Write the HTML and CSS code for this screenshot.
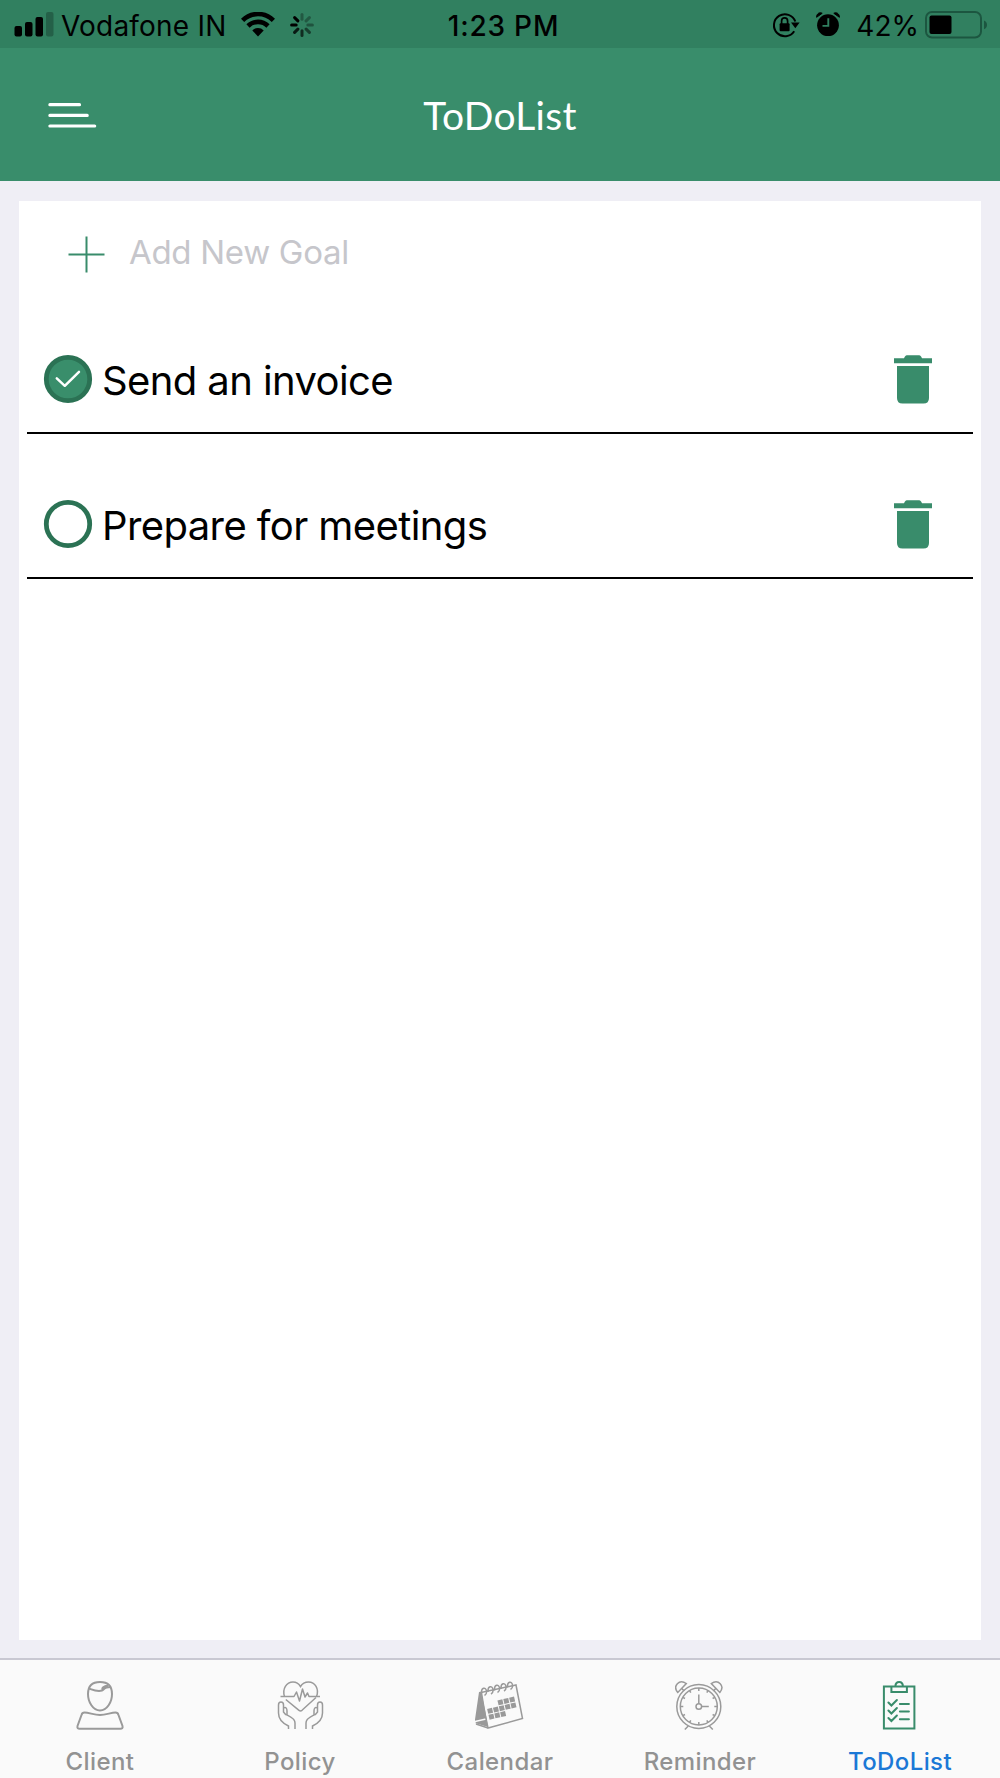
FILE: index.html
```html
<!DOCTYPE html>
<html lang="en">
<head>
  <meta charset="UTF-8"/>
  <meta name="viewport" content="width=device-width, initial-scale=1.0"/>
  <title>ToDoList</title>
  <link rel="stylesheet" href="styles.css">
</head>
<body>
<div class="status-bar">
  <div class="status-left">
    <svg class="signal" width="40" height="26" viewBox="0 0 40 26">
      <rect x="0.5" y="15" width="7.5" height="10.5" rx="2"/>
      <rect x="11" y="11" width="7.5" height="14.5" rx="2"/>
      <rect x="21.5" y="6" width="7.5" height="19.5" rx="2"/>
      <rect x="32" y="1" width="7.5" height="24.5" rx="2" opacity="0.25"/>
    </svg>
    <span class="carrier">Vodafone IN</span>
    <svg class="wifi" width="34" height="25" viewBox="0 0 34 25">
      <g fill="none" stroke="#000" stroke-width="4.6">
        <path d="M1.6 8.3a22 22 0 0 1 30.8 0"/>
        <path d="M7 14a14.3 14.3 0 0 1 20 0"/>
      </g>
      <path d="M11.3 18.4a8 8 0 0 1 11.4 0L17 24.4z"/>
    </svg>
    <svg class="spinner" width="24" height="24" viewBox="-12 -12 24 24">
      <g stroke="#000" stroke-width="3" stroke-linecap="round">
        <path d="M0-5.8V-10.4" opacity="0.3"/>
        <path d="M4.1-4.1L7.4-7.4" opacity="0.3"/>
        <path d="M5.8 0H10.4" opacity="0.35"/>
        <path d="M4.1 4.1L7.4 7.4" opacity="0.5"/>
        <path d="M0 5.8V10.4" opacity="0.65"/>
        <path d="M-4.1 4.1L-7.4 7.4" opacity="0.8"/>
        <path d="M-5.8 0H-10.4"/>
        <path d="M-4.1-4.1L-7.4-7.4"/>
      </g>
    </svg>
  </div>
  <span class="time">1:23 PM</span>
  <div class="status-right">
    <svg class="lock" width="28" height="26" viewBox="0 0 28 26">
      <path d="M22.2 19.2A11 11 0 1 1 23.3 9.5" fill="none" stroke="#000" stroke-width="2"/>
      <path d="M19 10.6h8.6l-4.3 5.6z"/>
      <rect x="7.6" y="11.2" width="10" height="8" rx="1"/>
      <path d="M9.6 12V9a3 3.2 0 0 1 6 0v3" fill="none" stroke="#000" stroke-width="1.7"/>
    </svg>
    <svg class="alarm" width="24" height="25" viewBox="0 0 24 25">
      <circle cx="12" cy="13.2" r="10.9"/>
      <path d="M0.6 5.3C0.6 1.5 3.5-0.1 6.2 1.3zM23.4 5.3C23.4 1.5 20.5-0.1 17.8 1.3z" stroke="#000"/>
      <path d="M12.3 6.3v7.6H6.5" fill="none" stroke="#318060" stroke-width="1.9"/>
    </svg>
    <span class="percent">42%</span>
    <svg class="battery" width="64" height="28" viewBox="0 0 64 28">
      <rect x="1" y="1" width="55" height="25.5" rx="6" fill="none" stroke="#1c5640" stroke-width="2"/>
      <rect x="4.5" y="4.5" width="22" height="18.5" rx="2"/>
      <path d="M59 9.5c4 1.4 4 7.4 0 8.8z" fill="#1c5640"/>
    </svg>
  </div>
</div>

<header>
  <svg class="menu-btn" width="49" height="26" viewBox="0 0 49 26">
    <path d="M1.9 2.7H31.5M1.9 13.4H39.2M1.9 24H46.7" stroke="#fff" stroke-width="3.2" stroke-linecap="round"/>
  </svg>
  <h1>ToDoList</h1>
</header>

<main>
  <div class="card">
    <div class="add-goal">
      <svg width="37" height="37" viewBox="0 0 37 37">
        <path d="M18.5 0.5V36.5M0.5 18.5H36.5" stroke="#398c6b" stroke-width="2"/>
      </svg>
      <span>Add New Goal</span>
    </div>

    <ul class="goal-list">
      <li>
        <svg class="check" width="50" height="50" viewBox="0 0 50 50">
          <circle cx="25" cy="25" r="21.7" fill="#398e6b" stroke="#2b7254" stroke-width="4.8"/>
          <path d="M13.8 24.3L21.8 31.8L36 17.8" fill="none" stroke="#fff" stroke-width="2.5" stroke-linecap="round" stroke-linejoin="round"/>
        </svg>
        <span class="goal-text">Send an invoice</span>
        <svg class="trash" width="38" height="49" viewBox="0 0 38 49">
          <path d="M0 3.2H10C11 0.8 12 0.3 14 0.3H24C26 0.3 27 0.8 28 3.2H38V8.3H0zM3 11H35V43Q35 48.5 29.5 48.5H8.5Q3 48.5 3 43z"/>
        </svg>
      </li>
      <li>
        <svg class="check" width="50" height="50" viewBox="0 0 50 50">
          <circle cx="25" cy="25" r="21.7" fill="#fff" stroke="#2b7254" stroke-width="4.8"/>
        </svg>
        <span class="goal-text">Prepare for meetings</span>
        <svg class="trash" width="38" height="49" viewBox="0 0 38 49">
          <path d="M0 3.2H10C11 0.8 12 0.3 14 0.3H24C26 0.3 27 0.8 28 3.2H38V8.3H0zM3 11H35V43Q35 48.5 29.5 48.5H8.5Q3 48.5 3 43z"/>
        </svg>
      </li>
    </ul>
  </div>
</main>

<nav>
  <a class="tab">
    <svg width="50" height="50" viewBox="0 0 50 50">
      <path d="M25 2C17 2 13 6 13 14C13 22 18 30.5 25 30.5C32 30.5 37 22 37 14C37 6 33 2 25 2z"/>
      <path d="M14 8.5C17 9.5 22 12 27 10.5C30 9.5 28 7 35.5 7M28 10.5C26 8 29 6 33 5.5"/>
      <path d="M9.5 32.5C14 32.5 19 35 25 35C31 35 36 32.5 40.5 32.5C42 32.5 43 33 43.5 35L47.5 46C48 47.8 47 48.8 45.5 48.8H4.5C3 48.8 2 47.8 2.5 46L6.5 35C7 33 8 32.5 9.5 32.5z"/>
    </svg>
    <span>Client</span>
  </a>
  <a class="tab">
    <svg class="thin" width="50" height="50" viewBox="0 0 50 50">
      <path d="M9.5 16.5C7 9 11.5 2 18 2C22 2 24 4 25.5 6.5C27 4 29.5 2 33.5 2C40 2 44.5 9 41.5 16.5M10.8 19.5L24 30.3Q25.5 31.5 27 30.3L41 17.5"/>
      <path d="M5.5 16.5H19L21.5 12L24.5 21L27.5 9L30 17L32.5 13L34 16.5H45" stroke-linejoin="round"/>
      <path d="M13.5 49V46C7 43 3.5 38 3.5 33V25Q3.5 22 6 22Q8.5 22 8.5 25V32L11 35M8.5 28Q12 26.5 12 31V35C15 36.5 20 38.5 20 43V49"/>
      <path d="M37.5 49V46C44 43 47.5 38 47.5 33V25Q47.5 22 45 22Q42.5 22 42.5 25V32L40 35M42.5 28Q39 26.5 39 31V35C36 36.5 31 38.5 31 43V49"/>
    </svg>
    <span>Policy</span>
  </a>
  <a class="tab">
    <svg class="thin" width="50" height="50" viewBox="1 0 50 50">
      <path class="fill" d="M5 12L8 11.5L14 47L1 43L3 41.5L0.8 41z"/>
      <path d="M1 41.5L12 39" stroke="#fafafa"/>
      <path d="M7 12.5L42 5L48.5 38.5L14 48L6.5 12.5M2 44L14 48"/>
      <path d="M7.5 13.5C7 7 12 7 12.5 11Q13 14 10.5 15.5M14 12C13.5 5.5 18.5 5.5 19 9.5Q19.5 12.5 17 14M20.5 10.5C20 4 25 4 25.5 8Q26 11 23.5 12.5M27 9C26.5 2.5 31.5 2.5 32 6.5Q32.5 9.5 30 11M33.5 7.5C33 1 38 1 38.5 5Q39 8 36.5 9.5"/>
      <g class="fill" transform="translate(13 28.5) rotate(-13)">
        <rect x="12" y="-5.5" width="5" height="5"/>
        <rect x="18" y="-5.5" width="5" height="5"/>
        <rect x="24" y="-5.5" width="5" height="5"/>
        <rect x="0" y="0.5" width="5" height="5"/>
        <rect x="6" y="0.5" width="5" height="5"/>
        <rect x="12" y="0.5" width="5" height="5"/>
        <rect x="18" y="0.5" width="5" height="5"/>
        <rect x="24" y="0.5" width="5" height="5"/>
        <rect x="0" y="6.5" width="5" height="5"/>
        <rect x="6" y="6.5" width="5" height="5"/>
        <rect x="12" y="6.5" width="5" height="5"/>
      </g>
    </svg>
    <span>Calendar</span>
  </a>
  <a class="tab">
    <svg class="thin" width="50" height="50" viewBox="0.7 0 50 50">
      <circle cx="24.5" cy="26.5" r="22"/>
      <circle cx="24.5" cy="26.5" r="18.5"/>
      <circle cx="24.5" cy="26.5" r="2.8"/>
      <path d="M24.5 23.5V14.5M27.5 26.5H34.5M24.5 8V11M24.5 42V45M6 26.5H9M40 26.5H43M15.2 10.5L16.5 12.7M33.8 10.5L32.5 12.7M8.5 17.3L10.7 18.5M40.5 17.3L38.3 18.5M8.5 35.7L10.7 34.5M40.5 35.7L38.3 34.5M15.2 42.5L16.5 40.3M33.8 42.5L32.5 40.3"/>
      <path d="M3.5 12.5C-2 6 5 -1.5 12 3.5zM45.5 12.5C51 6 44 -1.5 37 3.5zM7.5 8.5L10 11M41.5 8.5L39 11M14 46L10.5 49.5M35 46L38.5 49.5"/>
    </svg>
    <span>Reminder</span>
  </a>
  <a class="tab active">
    <svg width="50" height="50" viewBox="0.6 0 50 50">
      <path d="M17 6.5H9.5V48.5H40V6.5H32.5M17 6.5H32.5V12H17zM21 6.5C21 0.5 28.5 0.5 28.5 6.5"/>
      <path d="M14 22.5L17 25.5L22.5 20M14 30.5L17 33.5L22.5 28M14 38L17 41L22.5 35.5M25.5 24H34.5M25.5 31.5H34.5M25.5 39.2H34.5"/>
    </svg>
    <span>ToDoList</span>
  </a>
</nav>
</body>
</html>
```
FILE: styles.css
```css
body {
  display: flex;
  flex-direction: column;
  height: 1778px;
  margin: 0;
  background-color: #efeef5;
  color: #000;
  font-family: Inter, "Liberation Sans", sans-serif;
  overflow: hidden;
}

svg {
  display: block;
  flex-shrink: 0;
}

.status-bar {
  display: grid;
  grid-template-columns: 1fr auto 1fr;
  align-items: center;
  height: 48px;
  padding: 0 11px 0 14px;
  background-color: #318060;
  font-size: 28px;
  line-height: 34px;
  white-space: nowrap;
}

.status-left,
.status-right {
  display: flex;
  align-items: center;
}

.status-right {
  justify-content: flex-end;
}

.carrier {
  margin: 3px 15px 0 7px;
  letter-spacing: 0.2px;
}

.spinner {
  margin: 1px 0 0 15px;
}

.time {
  margin: 3px 0 0 4px;
  font-weight: 500;
  letter-spacing: 0.8px;
}

.lock,
.alarm {
  margin-top: 1px;
}

.alarm {
  margin-left: 16px;
  margin-right: 16px;
}

.percent {
  margin: 3px 6px 0 0;
}

.battery {
  margin-top: 1px;
}

header {
  display: grid;
  grid-template-columns: 1fr auto 1fr;
  align-items: center;
  height: 133px;
  padding: 0 48px;
  background-color: #398d6b;
  color: white;
}

h1 {
  margin: 0;
  font-family: Lato, sans-serif;
  font-size: 39px;
  font-weight: 400;
  letter-spacing: 0.3px;
}

main {
  flex: 1;
  display: flex;
  padding: 20px 19px 18px;
}

.card {
  flex: 1;
  background-color: #fff;
}

.add-goal {
  display: flex;
  align-items: center;
  gap: 24px;
  height: 88px;
  padding: 18px 0 0 49px;
  box-sizing: border-box;
  color: #c6c6cb;
  font-size: 33px;
  letter-spacing: -0.3px;
}

.add-goal span {
  margin-top: -4px;
}

.goal-list {
  list-style: none;
  margin: 0;
  padding: 0 8px;
}

.goal-list li {
  display: flex;
  align-items: center;
  height: 145px;
  padding: 37px 41px 0 16px;
  border-bottom: 2px solid #000;
  box-sizing: border-box;
}

.goal-text {
  flex: 1;
  margin: 2px 0 0 9px;
  font-size: 40px;
  letter-spacing: -0.6px;
}

.trash {
  fill: #398c6b;
}

nav {
  display: flex;
  height: 120px;
  border-top: 2px solid #c9c8d2;
  background-color: #fafafa;
  box-sizing: border-box;
}

.tab {
  flex: 1;
  display: flex;
  flex-direction: column;
  align-items: center;
  padding-top: 20px;
  color: #929292;
  font-size: 24px;
  font-weight: 500;
  letter-spacing: 0.4px;
}

.tab span {
  margin-top: 17px;
  line-height: 30px;
}

.tab svg {
  fill: none;
  stroke: #9a9a9a;
  stroke-width: 2;
}

.tab .thin {
  stroke-width: 1.5;
}

.tab .fill {
  fill: #999;
  stroke: none;
}

.active {
  color: #1b78d6;
}

.tab.active svg {
  stroke: #398c6b;
  stroke-linecap: round;
}
```
